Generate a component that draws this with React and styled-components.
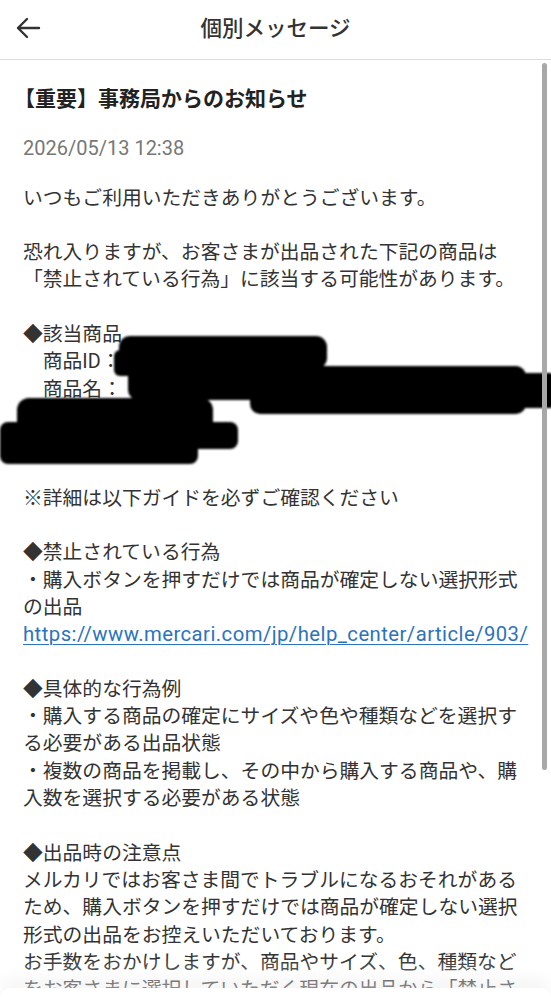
import styled, { createGlobalStyle } from "styled-components";

const GlobalStyle = createGlobalStyle`
  html, body {
    margin: 0;
    padding: 0;
    background: #ffffff;
  }
  body {
    overflow: hidden;
  }
`;

const sans = `Roboto, "Noto Sans CJK JP", sans-serif`;

const bodyLines = [
  "いつもご利用いただきありがとうございます。",
  "",
  "恐れ入りますが、お客さまが出品された下記の商品は",
  "「禁止されている行為」に該当する可能性があります。",
  "",
  "◆該当商品",
  "　商品ID：",
  "　商品名：",
  "",
  "",
  "",
  "※詳細は以下ガイドを必ずご確認ください",
  "",
  "◆禁止されている行為",
  "・購入ボタンを押すだけでは商品が確定しない選択形式",
  "の出品",
  { link: "https://www.mercari.com/jp/help_center/article/903/" },
  "",
  "◆具体的な行為例",
  "・購入する商品の確定にサイズや色や種類などを選択す",
  "る必要がある出品状態",
  "・複数の商品を掲載し、その中から購入する商品や、購",
  "入数を選択する必要がある状態",
  "",
  "◆出品時の注意点",
  "メルカリではお客さま間でトラブルになるおそれがある",
  "ため、購入ボタンを押すだけでは商品が確定しない選択",
  "形式の出品をお控えいただいております。",
  "お手数をおかけしますが、商品やサイズ、色、種類など",
  "をお客さまに選択していただく現在の出品から「禁止さ",
];

const BackArrow = () => (
  <svg width="26" height="22" viewBox="0 0 26 22" fill="none">
    <path
      d="M24 11H3M12 2L3 11L12 20"
      stroke="#333"
      strokeWidth="2.4"
      strokeLinecap="round"
      strokeLinejoin="round"
    />
  </svg>
);

// marker scribbles that hide the item details in the screenshot
const Scribble = () => (
  <RedactionSvg width="551" height="140" viewBox="0 0 551 140">
    <defs>
      <filter id="soft" x="-5%" y="-20%" width="110%" height="140%">
        <feGaussianBlur stdDeviation="1" />
      </filter>
    </defs>
    <g fill="#000" filter="url(#soft)">
      <rect x="119" y="6" width="208" height="33" rx="11" />
      <rect x="114" y="20" width="24" height="26" rx="6" />
      <rect x="128" y="36" width="396" height="34" rx="10" />
      <rect x="250" y="36" width="276" height="48" rx="10" />
      <rect x="516" y="43" width="40" height="35" rx="6" />
      <rect x="17" y="68" width="196" height="40" rx="12" />
      <rect x="0" y="92" width="238" height="27" rx="8" />
      <rect x="0" y="96" width="198" height="38" rx="8" />
    </g>
  </RedactionSvg>
);

const App = () => {
  return (
    <>
      <GlobalStyle />
      <Screen>
        <Header>
          <BackButton>
            <BackArrow />
          </BackButton>
          <HeaderTitle>個別メッセージ</HeaderTitle>
        </Header>
        <Content>
          <Title>
            <Bracket>【</Bracket>重要】事務局からのお知らせ
          </Title>
          <DateText>2026/05/13 12:38</DateText>
          <Body>
            {bodyLines.map((line, i) =>
              typeof line === "string" ? (
                <Line key={i}>{line}</Line>
              ) : (
                <Line key={i}>
                  <Link href={line.link}>{line.link}</Link>
                </Line>
              )
            )}
          </Body>
        </Content>
        <Scribble />
        <ScrollBar />
        <Fade />
        <Sheet />
      </Screen>
    </>
  );
};

export default App;

const Screen = styled.div`
  position: relative;
  width: 551px;
  height: 999px;
  overflow: hidden;
  background: #ffffff;
  display: flex;
  flex-direction: column;
  font-family: ${sans};
  color: #333333;
`;

const Header = styled.header`
  flex: 0 0 59px;
  display: flex;
  align-items: center;
  justify-content: center;
  position: relative;
  border-bottom: 1px solid #dcdcdc;
`;

const BackButton = styled.div`
  position: absolute;
  left: 15px;
  top: 17px;
  display: flex;
`;

const HeaderTitle = styled.h1`
  margin: 0;
  font-size: 21.5px;
  font-weight: 500;
  color: #333333;
  line-height: 1;
  padding-bottom: 2px;
`;

const Content = styled.main`
  padding: 25px 22px 0 23px;
  display: flex;
  flex-direction: column;
`;

const Title = styled.h2`
  margin: 0;
  font-size: 21px;
  line-height: 28px;
  font-weight: 700;
  color: #222222;
  white-space: nowrap;
`;

const Bracket = styled.span`
  margin-left: -9px;
`;

const DateText = styled.div`
  margin-top: 22px;
  font-family: Roboto, sans-serif;
  font-size: 20px;
  line-height: 27px;
  color: #777777;
`;

const Body = styled.div`
  margin-top: 22.5px;
  font-size: 19.8px;
  line-height: 27.3px;
  color: #333333;
`;

const Line = styled.div`
  min-height: 27.3px;
  white-space: nowrap;
`;

const Link = styled.a`
  color: #2b73bd;
  font-size: 20.3px;
  letter-spacing: 0.45px;
  text-decoration: underline;
  text-underline-offset: 3px;
  text-decoration-thickness: 1px;
`;

const RedactionSvg = styled.svg`
  position: absolute;
  left: 0;
  top: 330px;
  pointer-events: none;
`;

const ScrollBar = styled.div`
  position: absolute;
  left: 542px;
  top: 63px;
  width: 5px;
  height: 707px;
  border-radius: 3px;
  background: #a8a8a8;
`;

const Fade = styled.div`
  position: absolute;
  left: 0;
  right: 0;
  bottom: 11px;
  height: 30px;
  background: linear-gradient(
    to bottom,
    rgba(255, 255, 255, 0) 0%,
    rgba(255, 255, 255, 0.45) 100%
  );
`;

const Sheet = styled.div`
  position: absolute;
  left: 0;
  right: 0;
  bottom: 0;
  height: 11px;
  background: #ffffff;
  border-radius: 18px 18px 0 0;
  box-shadow: 0 -5px 18px rgba(0, 0, 0, 0.08);
`;
